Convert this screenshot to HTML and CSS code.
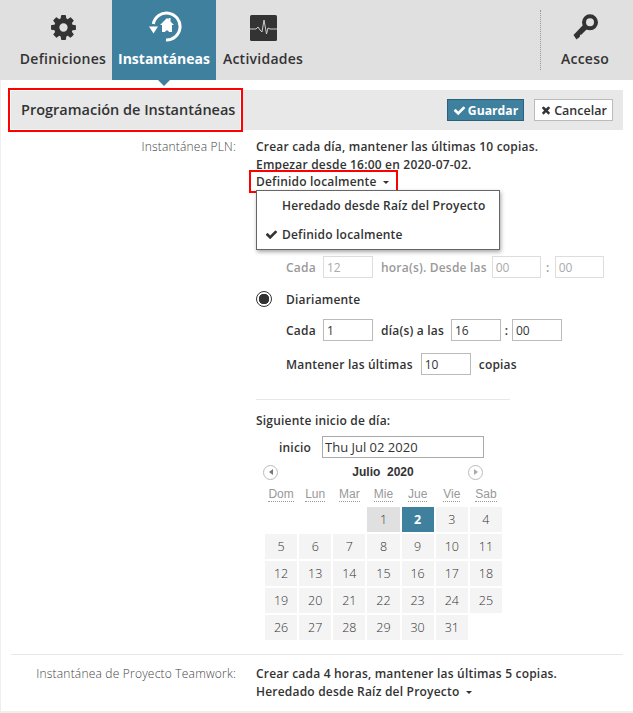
FILE: index.html
```html
<!DOCTYPE html>
<html lang="es">
<head>
  <meta charset="UTF-8" />
  <title>Programación de Instantáneas</title>
  <link rel="stylesheet" href="styles.css">
</head>
<body>
  <nav class="tabs">
    <div class="tab tab-defs">
      <svg class="tab-icon" width="29" height="29" viewBox="0 0 1792 1792"><path fill="#333" d="M1152 896q0-106-75-181t-181-75-181 75-75 181 75 181 181 75 181-75 75-181zm512-109v222q0 12-8 23t-20 13l-185 28q-19 54-39 91 35 50 107 138 10 12 10 25t-9 23q-27 37-99 108t-94 71q-12 0-26-9l-138-108q-44 23-91 38-16 136-29 186-7 28-36 28h-222q-14 0-24.5-8.5t-11.5-21.5l-28-184q-49-16-90-37l-141 107q-10 9-25 9-14 0-25-11-126-114-165-168-7-10-7-23 0-12 8-23 15-21 51-66.5t54-70.5q-27-50-41-99l-183-27q-13-2-21-12.5t-8-23.5v-222q0-12 8-23t19-13l186-28q14-46 39-92-40-57-107-138-10-12-10-24 0-10 9-23 26-36 98.5-107.5t94.5-71.5q13 0 26 10l138 107q44-23 91-38 16-136 29-186 7-28 36-28h222q14 0 24.5 8.5t11.5 21.5l28 184q49 16 90 37l142-107q9-9 24-9 13 0 25 10 129 119 165 170 7 8 7 22 0 12-8 23-15 21-51 66.5t-54 70.5q26 50 41 98l183 28q13 2 21 12.5t8 23.5z"/></svg>
      <span>Definiciones</span>
    </div>
    <div class="tab tab-snap active">
      <svg class="tab-icon" width="36" height="36" viewBox="0 0 36 36">
        <path d="M7.300 14A13.500 13.500 0 1 1 20 30" fill="none" stroke="#fff" stroke-width="3"/>
        <path d="M3 16.500h9l-4.500 7z" fill="#fff"/>
        <path d="M21 8l1.500 1.500v-1.500h2v3.500l3.500 3.500h-2v7h-3l-1-1.500h-2l-1 1.500h-3v-7h-2z" fill="#fff"/>
      </svg>
      <span>Instantáneas</span>
    </div>
    <div class="tab tab-acts">
      <svg class="tab-icon" width="27" height="26" viewBox="0 0 27 26">
        <rect width="27" height="26" rx="1.500" fill="#333"/>
        <path d="M0 14h6l2-2 2 3 2 2 2-12 2.500 14 1.500-6 2 1h7" fill="none" stroke="#ccc" stroke-width="1"/>
      </svg>
      <span>Actividades</span>
    </div>
    <div class="tab tab-access">
      <svg class="tab-icon" width="27" height="28" viewBox="0 0 27 28">
        <circle cx="18" cy="8.300" r="6" fill="none" stroke="#333" stroke-width="4"/>
        <path d="M12 10l4 4-7 7-1-.5v2l-1.500 1.500-1 .5-1 1-3-4.500z" fill="#333"/>
      </svg>
      <span>Acceso</span>
    </div>
  </nav>
  <div class="tab-arrow"></div>

  <main class="panel">
    <header class="panel-head">
      <h1 class="panel-title">Programación de Instantáneas</h1>
      <div class="panel-actions">
        <button class="btn btn-save">
          <svg width="13" height="13" viewBox="0 0 1792 1792"><path fill="#fff" d="M1671 566q0 40-28 68l-724 724-136 136q-28 28-68 28t-68-28l-136-136-362-362q-28-28-28-68t28-68l136-136q28-28 68-28t68 28l294 295 656-657q28-28 68-28t68 28l136 136q28 28 28 68z"/></svg>
          Guardar
        </button>
        <button class="btn btn-cancel">
          <svg width="12" height="12" viewBox="0 0 1792 1792"><path fill="#333" d="M1490 1322q0 40-28 68l-136 136q-28 28-68 28t-68-28l-294-294-294 294q-28 28-68 28t-68-28l-136-136q-28-28-28-68t28-68l294-294-294-294q-28-28-28-68t28-68l136-136q28-28 68-28t68 28l294 294 294-294q28-28 68-28t68 28l136 136q28 28 28 68t-28 68l-294 294 294 294q28 28 28 68z"/></svg>
          Cancelar
        </button>
      </div>
    </header>

    <section class="field field-pln">
      <div class="field-label">Instantánea PLN:</div>
      <div class="field-body">
        <p class="summary">Crear cada día, mantener las últimas 10 copias.</p>
        <p class="summary">Empezar desde 16:00 en 2020-07-02.</p>
        <div class="drop-wrap">
          <span class="drop-link">Definido localmente <i class="caret"></i></span>
          <div class="flag-box"></div>
          <ul class="drop-menu">
            <li>Heredado desde Raíz del Proyecto</li>
            <li><svg class="menu-check" width="13" height="13" viewBox="0 0 1792 1792"><path fill="#333" d="M1671 566q0 40-28 68l-724 724-136 136q-28 28-68 28t-68-28l-136-136-362-362q-28-28-28-68t28-68l136-136q28-28 68-28t68 28l294 295 656-657q28-28 68-28t68 28l136 136q28 28 28 68z"/></svg>Definido localmente</li>
          </ul>
        </div>

        <div class="row row-muted">
          <label class="row-cada">Cada</label>
          <input class="num" value="12" disabled>
          <label class="gap-l">hora(s). Desde las</label>
          <input class="num num-sm" value="00" disabled>
          <label class="colon">:</label>
          <input class="num num-sm" value="00" disabled>
        </div>

        <div class="radio-row">
          <span class="radio"></span>
          <label>Diariamente</label>
        </div>

        <div class="row row-day">
          <label class="row-cada">Cada</label>
          <input class="num" value="1">
          <label class="gap-l">día(s) a las</label>
          <input class="num" value="16">
          <label class="colon">:</label>
          <input class="num" value="00">
        </div>

        <div class="row row-keep">
          <label class="keep-label">Mantener las últimas</label>
          <input class="num" value="10">
          <label class="gap-l">copias</label>
        </div>

        <hr class="rule">

        <div class="next-title">Siguiente inicio de día:</div>
        <div class="row row-start">
          <label class="start-label">inicio</label>
          <input class="date-input" value="Thu Jul 02 2020">
        </div>

        <div class="calendar">
          <div class="cal-head">
            <span class="cal-nav"><i class="tri-left"></i></span>
            <b class="cal-month">Julio&nbsp; 2020</b>
            <span class="cal-nav"><i class="tri-right"></i></span>
          </div>
          <div class="cal-days">
            <span>Dom</span><span>Lun</span><span>Mar</span><span>Mie</span><span>Jue</span><span>Vie</span><span>Sab</span>
          </div>
          <div class="cal-grid">
            <span class="blank"></span><span class="blank"></span><span class="blank"></span>
            <span class="today">1</span><span class="sel">2</span><span>3</span><span>4</span>
            <span>5</span><span>6</span><span>7</span><span>8</span><span>9</span><span>10</span><span>11</span>
            <span>12</span><span>13</span><span>14</span><span>15</span><span>16</span><span>17</span><span>18</span>
            <span>19</span><span>20</span><span>21</span><span>22</span><span>23</span><span>24</span><span>25</span>
            <span>26</span><span>27</span><span>28</span><span>29</span><span>30</span><span>31</span>
          </div>
        </div>
      </div>
    </section>

    <section class="field field-team">
      <div class="field-label">Instantánea de Proyecto Teamwork:</div>
      <div class="field-body">
        <p class="summary">Crear cada 4 horas, mantener las últimas 5 copias.</p>
        <span class="drop-link">Heredado desde Raíz del Proyecto <i class="caret"></i></span>
      </div>
    </section>
  </main>
</body>
</html>
```

FILE: styles.css
```css
* {
  box-sizing: border-box;
}

html, body {
  height: 100%;
}

body {
  margin: 0;
  background: #fff;
  color: #333;
  font-family: 'Open Sans', sans-serif;
  font-size: 12px;
  letter-spacing: 0.2px;
  overflow: hidden;
}

/* top tabs */
.tabs {
  display: flex;
  height: 80px;
  padding-left: 14px;
  background: #e0e0e0;
}

.tab {
  position: relative;
  display: flex;
  flex-direction: column;
  align-items: center;
  justify-content: flex-end;
  padding-bottom: 12px;
  font-size: 14px;
  font-weight: 600;
  letter-spacing: 0.25px;
  color: #333;
}

.tab-icon {
  position: absolute;
  top: 14px;
}

.tab-defs { width: 98px; }
.tab-snap { width: 104px; }
.tab-acts { width: 94px; }

.tab-defs .tab-icon { top: 13px; }
.tab-snap .tab-icon { top: 10px; }
.tab-acts .tab-icon { top: 15px; }

.tab.active {
  background: #40809f;
  color: #fff;
  font-weight: 700;
  letter-spacing: 0;
}

.tab-access {
  width: 88px;
  margin: 0 4px 0 auto;
}

.tab-access::before {
  content: "";
  position: absolute;
  left: -1px;
  top: 10px;
  bottom: 10px;
  border-left: 1px dotted #999;
}

.tab-arrow {
  position: absolute;
  left: 158px;
  top: 80px;
  border: 6px solid transparent;
  border-top-color: #40809f;
  border-bottom: 0;
}

/* panel */
.panel {
  height: 633px;
  padding: 10px 10px 0 1px;
  border-left: 1px solid #eee;
  border-bottom: 2px solid #eee;
}

.panel-head {
  display: flex;
  align-items: center;
  justify-content: space-between;
  height: 40px;
  margin-left: 8px;
  padding-right: 10px;
  background: #e8e8e8;
}

.panel-title {
  margin: 0;
  padding: 0 6px 0 11px;
  font-size: 14.5px;
  font-weight: 600;
  letter-spacing: 0;
  line-height: 40px;
  outline: 2px solid #f00;
  box-shadow: 0 0 0 1px #fff inset;
}

.panel-actions {
  display: flex;
  gap: 10px;
}

.btn {
  display: flex;
  align-items: center;
  justify-content: center;
  gap: 2px;
  height: 22px;
  padding: 0;
  font-family: inherit;
  font-size: 12.500px;
}

.btn-save {
  width: 77px;
  background: #40809f;
  border: 1px solid #2b6079;
  color: #fff;
  font-size: 12.200px;
  font-weight: 700;
  letter-spacing: 0;
}

.btn-cancel {
  width: 79px;
  background: #fff;
  border: 1px solid #bbb;
  color: #333;
  font-weight: 600;
}

/* form */
.field {
  display: grid;
  grid-template-columns: 234px 1fr;
  column-gap: 20px;
}

.field-pln {
  padding-top: 8px;
  height: 524px;
}

.field-team {
  margin-left: 9px;
  padding-top: 10px;
  grid-template-columns: 225px 1fr;
  border-top: 1px solid #e8e8e8;
}

.field-label {
  text-align: right;
  color: #444;
  font-weight: 300;
  line-height: 18px;
}

.summary {
  margin: 0;
  font-weight: 600;
  line-height: 17.500px;
}

.drop-wrap {
  position: relative;
  height: 18px;
}

.drop-link {
  font-weight: 600;
  line-height: 17.500px;
}

.flag-box {
  position: absolute;
  left: -7px;
  top: -3px;
  width: 149px;
  height: 23px;
  border: 2px solid #f00;
}

.caret {
  display: inline-block;
  margin-left: 3px;
  vertical-align: 2px;
  border: 3px solid transparent;
  border-top: 3px solid #333;
  border-bottom: 0;
}

.drop-menu {
  position: absolute;
  left: 0;
  top: 17px;
  width: 244px;
  height: 60px;
  margin: 0;
  padding: 0;
  list-style: none;
  background: #fff;
  border: 1px solid #666;
  box-shadow: 1px 2px 4px rgba(0,0,0,0.35);
  font-weight: 600;
  z-index: 2;
}

.drop-menu li {
  position: relative;
  height: 29px;
  padding-left: 25px;
  line-height: 29px;
}

.menu-check {
  position: absolute;
  left: 8px;
  top: 8px;
}

.row {
  display: flex;
  align-items: center;
  height: 22px;
  font-weight: 600;
}

.row-muted {
  margin-top: 65px;
  margin-left: 30px;
  color: #999;
}

.row-cada {
  width: 37px;
}

.gap-l {
  margin: 0 7px 0 8px;
}

.row-muted .gap-l {
  margin-right: 5px;
}

.colon {
  width: 11px;
  text-align: center;
}

.row-muted .colon {
  width: 14px;
}

.num {
  width: 50px;
  height: 22px;
  padding: 0 3px;
  border: 1px solid #bbb;
  font-family: inherit;
  font-size: 12px;
  font-weight: 400;
  color: #333;
  background: #fff;
}

.num:disabled {
  border-color: #ddd;
  color: #aaa;
}

.num-sm {
  width: 49px;
}

.radio-row {
  display: flex;
  align-items: center;
  height: 18px;
  margin-top: 12px;
  font-weight: 600;
}

.radio {
  width: 16px;
  height: 16px;
  margin-right: 14px;
  border: 1.500px solid #333;
  border-radius: 50%;
  background: radial-gradient(circle, #333 5px, #fff 5.500px);
}

.row-day {
  margin: 11px 0 0 30px;
}

.row-keep {
  margin: 12px 0 0 30px;
}

.keep-label {
  margin-right: 8px;
}

.rule {
  width: 254px;
  margin: 24px 0 14px;
  border: 0;
  border-top: 1px solid #e8e8e8;
}

.next-title {
  font-weight: 600;
  line-height: 14px;
}

.row-start {
  margin-top: 8px;
}

.start-label {
  width: 66px;
  padding-left: 23px;
}

.date-input {
  width: 162px;
  height: 22px;
  padding: 0 2px;
  border: 1px solid #aaa;
  font-family: inherit;
  font-size: 13px;
  color: #333;
}

/* calendar */
.calendar {
  width: 238px;
  margin: 5px 0 0 8px;
  font-family: 'Liberation Sans', sans-serif;
  letter-spacing: 0;
}

.cal-head {
  display: flex;
  align-items: center;
  justify-content: space-between;
  width: 220px;
  height: 18px;
  margin-left: -1px;
}

.cal-month {
  margin-left: 20px;
  font-size: 12px;
  color: #333;
}

.cal-nav {
  display: flex;
  align-items: center;
  justify-content: center;
  width: 15px;
  height: 15px;
  border: 1px solid #bbb;
  border-radius: 50%;
}

.tri-left, .tri-right {
  border: 3px solid transparent;
}

.tri-left {
  border-left: 0;
  border-right: 4px solid #777;
}

.tri-right {
  border-right: 0;
  border-left: 4px solid #aaa;
}

.cal-days {
  display: grid;
  grid-template-columns: repeat(7, 1fr);
  column-gap: 2px;
  margin-top: 7px;
  height: 19px;
  padding-left: 1px;
  text-align: center;
  font-size: 12px;
  color: #999;
}

.cal-days span {
  justify-self: center;
  align-self: start;
  line-height: 12px;
  padding-bottom: 1px;
  border-bottom: 1px dotted #999;
}

.cal-grid {
  display: grid;
  grid-template-columns: repeat(7, 1fr);
  grid-auto-rows: 25px;
  gap: 2px;
  padding-left: 1px;
  font-family: 'Open Sans', sans-serif;
  font-size: 12.500px;
  font-weight: 300;
  color: #333;
}

.cal-grid span {
  display: flex;
  align-items: center;
  justify-content: center;
  background: #f4f4f4;
}

.cal-grid .blank {
  background: none;
}

.cal-grid .today {
  background: #e0e0e0;
}

.cal-grid .sel {
  background: #40809f;
  color: #fff;
  font-weight: 700;
}
```
